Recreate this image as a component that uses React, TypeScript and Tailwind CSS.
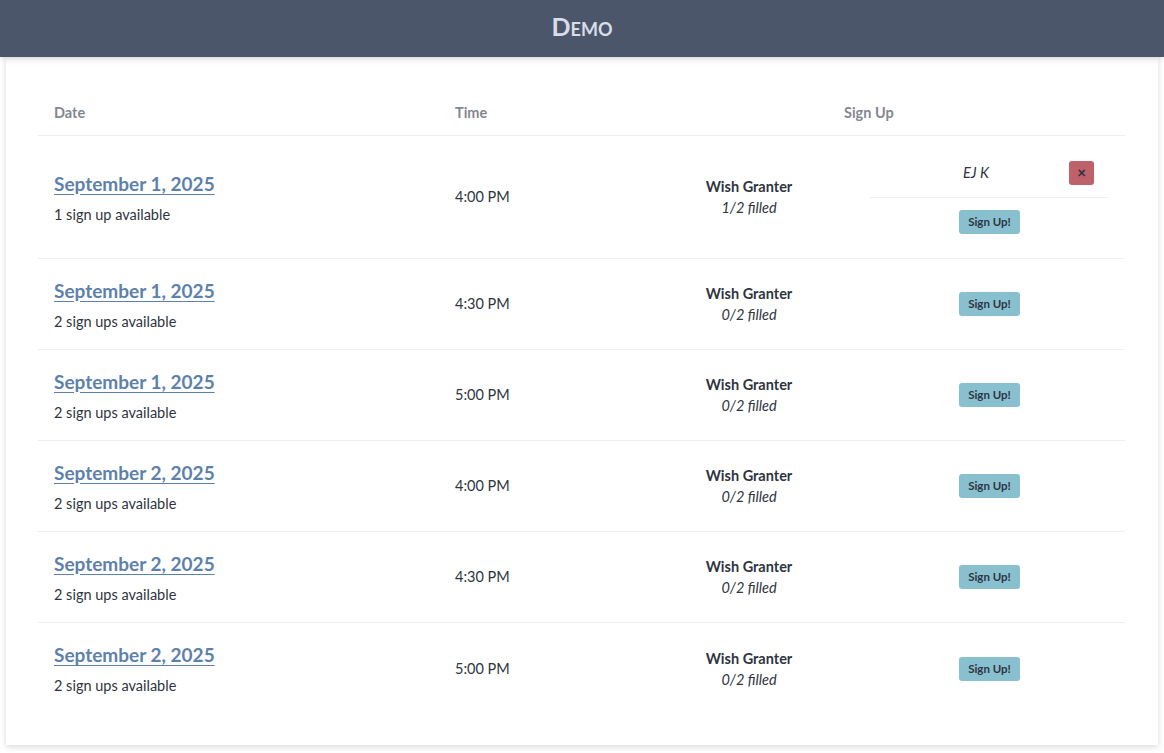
import React from 'react';

type Slot = {
  date: string;
  available: string;
  time: string;
  role: string;
  filled: string;
  names?: string[];
};

const slots: Slot[] = [
  { date: 'September 1, 2025', available: '1 sign up available', time: '4:00 PM', role: 'Wish Granter', filled: '1/2 filled', names: ['EJ K'] },
  { date: 'September 1, 2025', available: '2 sign ups available', time: '4:30 PM', role: 'Wish Granter', filled: '0/2 filled' },
  { date: 'September 1, 2025', available: '2 sign ups available', time: '5:00 PM', role: 'Wish Granter', filled: '0/2 filled' },
  { date: 'September 2, 2025', available: '2 sign ups available', time: '4:00 PM', role: 'Wish Granter', filled: '0/2 filled' },
  { date: 'September 2, 2025', available: '2 sign ups available', time: '4:30 PM', role: 'Wish Granter', filled: '0/2 filled' },
  { date: 'September 2, 2025', available: '2 sign ups available', time: '5:00 PM', role: 'Wish Granter', filled: '0/2 filled' },
];

const SignUpButton = () => (
  <button className="h-[24px] w-[61px] rounded-[3px] bg-[#88c0d0] text-[11.5px] font-bold text-[#2e3440]">
    Sign Up!
  </button>
);

const SlotRow = ({ slot, last }: { slot: Slot; last: boolean }) => {
  const hasNames = !!slot.names?.length;
  return (
    <div
      className={`grid grid-cols-[401px_205px_210px_1fr] items-center ${last ? '' : 'border-b border-[#eceff1]'} ${hasNames ? 'py-3' : 'h-[91px]'}`}
    >
      {/* Date */}
      <div className="px-4">
        <a href="#" className="block text-[19px] leading-[27px] font-bold text-[#5e81ac] underline underline-offset-[3px]">
          {slot.date}
        </a>
        <p className="mt-[8px] text-[14.5px] leading-[20px] text-[#2e3440]">{slot.available}</p>
      </div>

      {/* Time */}
      <div className="px-4 text-[14.5px] text-[#2e3440]">{slot.time}</div>

      {/* Role */}
      <div className="px-4 text-center text-[14.5px] leading-[21px] text-[#2e3440]">
        <div className="font-bold">{slot.role}</div>
        <div className="italic">{slot.filled}</div>
      </div>

      {/* Sign up */}
      <div className="px-4">
        {hasNames && (
          <div className="border-b border-[#eceff1]">
            {slot.names!.map((n) => (
              <div key={n} className="flex h-[49px] items-center">
                <div className="flex-1 pl-[28px] text-center text-[14.5px] italic text-[#2e3440]">{n}</div>
                <div className="px-[15px]">
                  <button className="flex h-[24px] w-[25px] items-center justify-center rounded-[3px] bg-[#bf616a] text-[15px] font-black leading-none text-[#2e3440]">
                    ×
                  </button>
                </div>
              </div>
            ))}
          </div>
        )}
        <div className={`flex justify-center ${hasNames ? 'h-[48px] items-center' : ''}`}>
          <SignUpButton />
        </div>
      </div>
    </div>
  );
};

export default function App() {
  return (
    <div className="min-h-screen bg-white pb-[8px]" style={{ fontFamily: 'Lato, "Open Sans", sans-serif' }}>
      <header className="relative z-10 flex h-[57px] items-center justify-center bg-[#4c566a] pb-[3px] shadow-md">
        <h1 className="text-[25px] font-bold text-[#d8dee9] [font-variant:small-caps]">Demo</h1>
      </header>

      <main className="px-[6px]">
        <div className="bg-white pt-[33px] pb-[31px] pl-[32px] pr-[33px] shadow-[0_2px_6px_rgba(0,0,0,0.15)]">
          {/* Header row */}
          <div className="grid h-[46px] grid-cols-[401px_205px_210px_1fr] items-center border-b border-[#eceff1] text-[14.5px] font-bold text-[#838791]">
            <div className="px-4">Date</div>
            <div className="px-4">Time</div>
            <div className="col-span-2 pl-[200px]">Sign Up</div>
          </div>

          {slots.map((s, i) => (
            <SlotRow key={i} slot={s} last={i === slots.length - 1} />
          ))}
        </div>
      </main>
    </div>
  );
}
